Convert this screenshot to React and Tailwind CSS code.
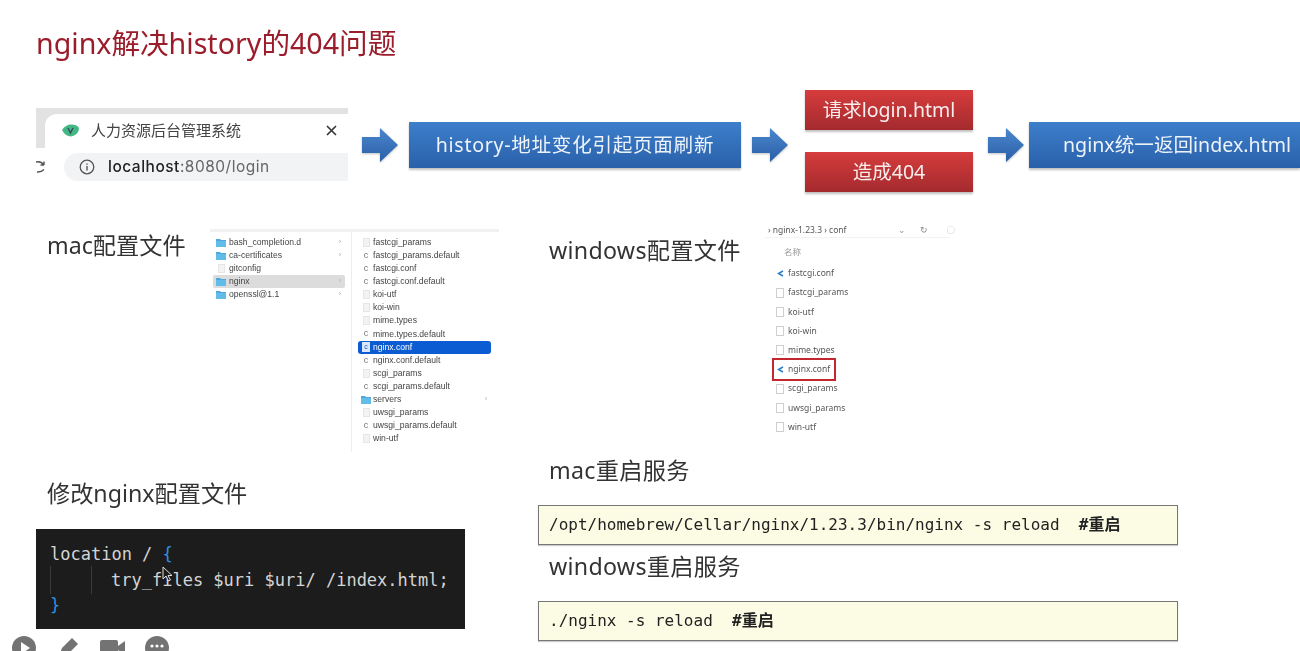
import React from "react";

const cjk = "font-['Noto_Sans','Noto_Sans_CJK_SC',sans-serif]";

const Arrow = ({ id }) => (
  <svg width="36" height="36" viewBox="0 0 36 36" className="shrink-0 drop-shadow-[0_1px_1px_rgba(0,0,0,0.25)]">
    <defs>
      <linearGradient id={id} x1="0" y1="0" x2="0" y2="1">
        <stop offset="0" stopColor="#4a87cc" />
        <stop offset="1" stopColor="#2b5fa8" />
      </linearGradient>
    </defs>
    <path d="M0 10 H18 V1 L36 18 L18 35 V26 H0 Z" fill={`url(#${id})`} />
  </svg>
);

const Folder = () => (
  <svg width="10" height="9" viewBox="0 0 10 9" className="shrink-0">
    <path d="M0 1 H4 L5 2 H10 V9 H0 Z" fill="#4fa9dc" />
    <rect y="3" width="10" height="6" fill="#62bce8" />
  </svg>
);

const Page = ({ c, on }) => (
  <span className="w-[10px] shrink-0 flex justify-center">
    {c ? (
      <span className={on ? "w-[8px] h-[10px] bg-[#dbe8fb] text-[7px] leading-[10px] text-center text-[#0b5bd3]" : "text-[9px] leading-none text-[#777]"}>c</span>
    ) : (
      <span className="w-[7px] h-[9px] bg-[#f3f3f3] border border-[#e6e6e6]" />
    )}
  </span>
);

const leftFiles = [
  ["bash_completion.d", true],
  ["ca-certificates", true],
  ["gitconfig", false],
  ["nginx", true, true],
  ["openssl@1.1", true],
];

const rightFiles = [
  ["fastcgi_params", 0],
  ["fastcgi_params.default", 1],
  ["fastcgi.conf", 1],
  ["fastcgi.conf.default", 1],
  ["koi-utf", 0],
  ["koi-win", 0],
  ["mime.types", 0],
  ["mime.types.default", 1],
  ["nginx.conf", 1, true],
  ["nginx.conf.default", 1],
  ["scgi_params", 0],
  ["scgi_params.default", 1],
  ["servers", 2],
  ["uwsgi_params", 0],
  ["uwsgi_params.default", 1],
  ["win-utf", 0],
];

const winFiles = [
  ["fastcgi.conf", true],
  ["fastcgi_params"],
  ["koi-utf"],
  ["koi-win"],
  ["mime.types"],
  ["nginx.conf", true, true],
  ["scgi_params"],
  ["uwsgi_params"],
  ["win-utf"],
];

const Finder = () => (
  <div className="w-[289px] h-[223px] border-t-[3px] border-[#f1f1f1] flex font-['Liberation_Sans',sans-serif] text-[8.6px] text-[#444] blur-[0.4px]">
    <div className="w-[142px] pt-[4px] pl-[3px] pr-[6px] border-r border-[#eeeeee]">
      {leftFiles.map(([name, dir, on]) => (
        <div key={name} className={`h-[13px] flex items-center gap-[3px] pl-[3px] pr-[4px] rounded-[2px] ${on ? "bg-[#dcdcdc]" : ""}`}>
          {dir ? <Folder /> : <Page />}
          <span className="flex-1">{name}</span>
          {dir && <span className="text-[7px] text-[#aaa]">›</span>}
        </div>
      ))}
    </div>
    <div className="w-[139px] pt-[4px] pl-[6px]">
      {rightFiles.map(([name, kind, on]) => (
        <div key={name} className={`h-[13.07px] flex items-center gap-[2px] pl-[3px] pr-[4px] rounded-[3px] ${on ? "bg-[#0b5bd3] text-white" : ""}`}>
          {kind === 2 ? <Folder /> : <Page c={kind === 1} on={on} />}
          <span className="flex-1">{name}</span>
          {kind === 2 && <span className="text-[7px] text-[#aaa]">›</span>}
        </div>
      ))}
    </div>
  </div>
);

const Explorer = () => (
  <div className={`w-[185px] h-[213px] ${cjk} text-[8.5px] text-[#555] blur-[0.4px]`}>
    <div className="h-[15px] flex items-center pl-[3px] border-b border-[#f3f3f3] whitespace-nowrap mt-[1px]">
      <span>› nginx-1.23.3 › conf</span>
      <span className="ml-[52px] text-[#999]">⌄</span>
      <span className="ml-[14px] text-[#888]">↻</span>
      <span className="ml-[18px] text-[#bbb]">○</span>
    </div>
    <div className="pl-[19px] pt-[8px] text-[#999] h-[25px]">名称</div>
    <div className="pl-[9px] pt-[1px]">
      {winFiles.map(([name, vs, on]) => (
        <div key={name} className={`h-[19.2px] flex items-center gap-[4px] w-[60px] pl-[2px] ${on ? "ring-2 ring-[#c2272d]" : ""}`}>
          {vs ? (
            <svg width="7" height="7" viewBox="0 0 7 7" className="shrink-0 ml-[1px]">
              <path d="M6 1 L1.5 3.5 L6 6" fill="none" stroke="#2b7cc4" strokeWidth="1.6" />
            </svg>
          ) : (
            <span className="w-[8px] h-[10px] bg-white border border-[#cfcfcf] shrink-0" />
          )}
          <span className="whitespace-nowrap">{name}</span>
        </div>
      ))}
    </div>
  </div>
);

const Browser = () => (
  <div className={`w-[313px] h-[74px] flex flex-col ${cjk}`}>
    <div className="h-[6px] bg-[#e2e2e2]" />
    <div className="h-[38px]">
      <div className="h-[34px] bg-[#e2e2e2] pl-[9px]">
        <div className="h-full bg-white flex items-center rounded-tl-xl pl-[17px] pr-[11px] pb-[1px]">
          <svg width="17" height="13" viewBox="0 0 17 13" className="shrink-0">
            <path d="M0 6 Q4 0 10 0.5 Q17 1 17 5 Q16 11 9 12.5 Q3 12 0 6 Z" fill="#41b883" />
            <path d="M6 4 L8.5 9 L11 4" fill="none" stroke="#35495e" strokeWidth="1.4" />
          </svg>
          <span className="ml-[12px] flex-1 text-[15px] text-[#444]">人力资源后台管理系统</span>
          <svg width="11" height="11" viewBox="0 0 11 11">
            <path d="M1 1 L10 10 M10 1 L1 10" stroke="#333" strokeWidth="1.6" />
          </svg>
        </div>
      </div>
    </div>
    <div className="h-[30px] flex items-center">
      <div className="w-[28px] h-full flex items-center">
        <svg width="9" height="14" viewBox="0 0 9 14">
          <path d="M0 2 Q5 1 8 5 M8 5 L8 1.5 M8 5 L4.5 5 M1 12 Q5 12.5 8 9.5" fill="none" stroke="#555" strokeWidth="1.4" />
        </svg>
      </div>
      <div className="flex-1 h-[28px] bg-[#f1f3f4] rounded-l-full flex items-center pl-[15px]">
        <svg width="16" height="16" viewBox="0 0 16 16" className="shrink-0">
          <circle cx="8" cy="8" r="6.8" fill="none" stroke="#555" strokeWidth="1.3" />
          <path d="M8 7 V11.5 M8 4.4 V5.8" stroke="#555" strokeWidth="1.4" />
        </svg>
        <span className="ml-[13px] font-['Inter',sans-serif] text-[15.5px] text-[#222] font-medium tracking-[0.5px]">
          localhost<span className="text-[#666] font-normal">:8080/login</span>
        </span>
      </div>
    </div>
  </div>
);

const Heading = ({ children, className = "" }) => (
  <h2 className={`text-[23.2px] leading-[30px] text-[#333] ${cjk} ${className}`}>{children}</h2>
);

const Cmd = ({ children }) => (
  <div className="h-[40px] w-[640px] border border-[#777] bg-[#fcfce4] flex items-center pl-[10px] font-['DejaVu_Sans_Mono','Noto_Sans_CJK_SC',monospace] text-[16px] text-[#222] whitespace-pre shadow-[0_1px_1px_rgba(0,0,0,0.2)]">
    {children}
  </div>
);

const BlueBox = ({ w, pl, children }) => (
  <div className={`${w} ${pl} h-[46px] flex items-center bg-linear-to-b from-[#3d7fcb] to-[#2a60aa] text-[19.6px] text-[#eef3fa] whitespace-nowrap shadow-[0_2px_2px_rgba(0,0,0,0.25)]`}>
    {children}
  </div>
);

const RedBox = ({ children }) => (
  <div className="w-[168px] h-[40px] flex items-center justify-center bg-linear-to-b from-[#d63c3c] to-[#a42a2e] text-[19.5px] text-[#f8eeee] shadow-[0_2px_2px_rgba(0,0,0,0.25)]">
    {children}
  </div>
);

export default function App() {
  return (
    <div className={`relative w-[1300px] h-[651px] overflow-hidden bg-white ${cjk}`}>
      <div className="blur-[0.3px]">
        <h1 className="pt-[24px] pl-[36px] h-[90px] text-[28.6px] leading-[38px] text-[#9b1c2a]">nginx解决history的404问题</h1>

        {/* flow row */}
        <div className="h-[103px] pl-[36px] pt-[7px] flex items-center">
          <Browser />
          <div className="ml-[14px]"><Arrow id="a1" /></div>
          <div className="ml-[11px]">
            <BlueBox w="w-[332px]" pl="justify-center tracking-[0.7px]">history-地址变化引起页面刷新</BlueBox>
          </div>
          <div className="ml-[11px]"><Arrow id="a2" /></div>
          <div className="ml-[17px] -mt-[8px] flex flex-col gap-[22px]">
            <RedBox>请求login.html</RedBox>
            <RedBox>造成404</RedBox>
          </div>
          <div className="ml-[15px]"><Arrow id="a3" /></div>
          <div className="ml-[5px]">
            <BlueBox w="w-[271px]" pl="pl-[34px]">nginx统一返回index.html</BlueBox>
          </div>
        </div>

        {/* lower part */}
        <div className="mt-[29px] pl-[36px] grid grid-cols-[502px_1fr]">
          <div>
            <div className="flex h-[225px]">
              <Heading className="ml-[11px] w-[163px] pt-[8px]">mac配置文件</Heading>
              <div className="mt-[7px]"><Finder /></div>
            </div>
            <Heading className="ml-[11px] mt-[31px]">修改nginx配置文件</Heading>
            <div className="mt-[21px] w-[429px] h-[100px] bg-[#1c1c1c] pl-[14px] pt-[13px] font-['DejaVu_Sans_Mono',monospace] text-[17px] leading-[25.5px] text-[#d4d4d4] whitespace-pre relative">
              <div>location / <span className="text-[#2f8fe0]">{"{"}</span></div>
              <div className="relative pl-[61px]">
                <span className="absolute left-[0px] top-[-2px] h-[28px] border-l border-[#3a3a3a]" />
                <span className="absolute left-[41px] top-[-2px] h-[28px] border-l border-[#3a3a3a]" />
                try_files $uri $uri/ /index.html;
              </div>
              <div className="text-[#2f8fe0]">{"}"}</div>
              <svg width="12" height="16" viewBox="0 0 12 16" className="absolute left-[126px] top-[37px]">
                <path d="M1 1 V13 L4 10 L6.5 15 L8.5 14 L6 9.5 H10 Z" fill="#1c1c1c" stroke="#ddd" strokeWidth="1" />
              </svg>
            </div>
          </div>
          <div>
            <div className="flex h-[228px]">
              <Heading className="ml-[11px] w-[216px] pt-[13px] tracking-[0.3px]">windows配置文件</Heading>
              <Explorer />
            </div>
            <Heading className="ml-[11px] mt-[5px] tracking-[0.3px]">mac重启服务</Heading>
            <div className="mt-[20px]">
              <Cmd>/opt/homebrew/Cellar/nginx/1.23.3/bin/nginx -s reload  <b>#重启</b></Cmd>
            </div>
            <Heading className="ml-[11px] mt-[6px] tracking-[0.3px]">windows重启服务</Heading>
            <div className="mt-[20px]">
              <Cmd>./nginx -s reload  <b>#重启</b></Cmd>
            </div>
          </div>
        </div>
      </div>

      {/* player controls, cut off by the bottom edge */}
      <div className="absolute left-[12px] top-[636px] flex items-center gap-[20px]">
        <svg width="24" height="24" viewBox="0 0 24 24">
          <circle cx="12" cy="12" r="12" fill="#737373" />
          <path d="M9 6 L18 12 L9 18 Z" fill="#fff" />
        </svg>
        <svg width="24" height="24" viewBox="0 0 24 24">
          <path d="M3 20 L6 12 L16 2 L22 8 L12 18 Z" fill="#737373" />
        </svg>
        <svg width="26" height="24" viewBox="0 0 26 24">
          <rect x="0" y="4" width="18" height="16" rx="2" fill="#737373" />
          <path d="M18 10 L25 5 V19 L18 14 Z" fill="#737373" />
        </svg>
        <svg width="24" height="24" viewBox="0 0 24 24" className="ml-[-1px]">
          <circle cx="12" cy="12" r="12" fill="#737373" />
          <circle cx="7" cy="10" r="1.6" fill="#fff" />
          <circle cx="12" cy="10" r="1.6" fill="#fff" />
          <circle cx="17" cy="10" r="1.6" fill="#fff" />
        </svg>
      </div>
    </div>
  );
}
